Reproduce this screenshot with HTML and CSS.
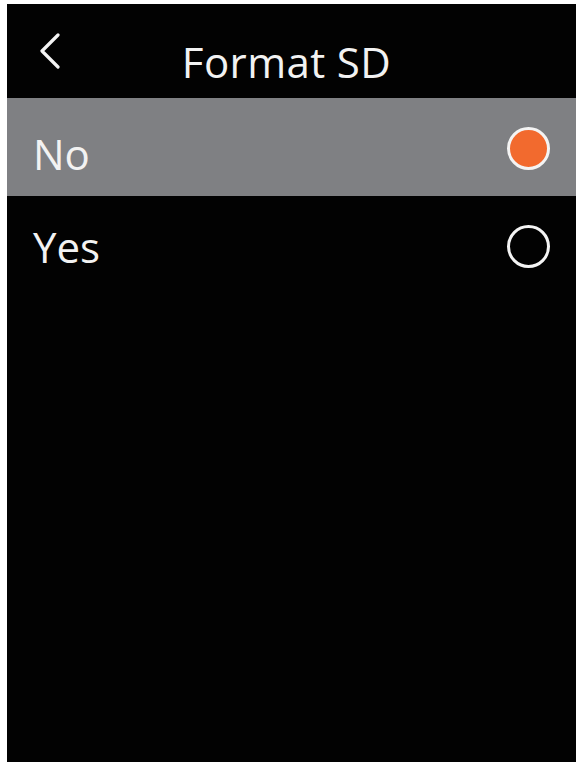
FILE: index.html
```html
<!DOCTYPE html>
<html lang="en">
<head>
<meta charset="utf-8">
<title>Format SD</title>
<link rel="stylesheet" href="styles.css">
</head>
<body>
<div class="screen">
  <header class="header">
    <button class="back" aria-label="Back">
      <svg width="24" height="36" viewBox="0 0 24 36"><path d="M20 2 L4 18 L20 34" fill="none" stroke="#f4f4f4" stroke-width="3.2" stroke-linecap="round" stroke-linejoin="round"/></svg>
    </button>
    <h1 class="title">Format SD</h1>
    <span class="spacer"></span>
  </header>
  <ul class="options">
    <li class="option selected"><span class="label">No</span><span class="radio checked"></span></li>
    <li class="option"><span class="label">Yes</span><span class="radio"></span></li>
  </ul>
</div>
</body>
</html>
```
FILE: styles.css
```css
html, body {
  margin: 0;
  padding: 0;
  background: #ffffff;
}
body {
  padding: 4px 7px 3px 7px;
  font-family: "Open Sans", "DejaVu Sans", sans-serif;
}
.screen {
  width: 569px;
  height: 758px;
  background: #020202;
  color: #f2f2f2;
  display: flex;
  flex-direction: column;
}
.header {
  height: 94px;
  display: grid;
  grid-template-columns: 1fr auto 1fr;
  align-items: center;
}
.back {
  justify-self: start;
  margin-left: 31px;
  padding: 0;
  border: 0;
  background: none;
  display: flex;
}
.title {
  margin: 22px 0 0 -10px;
  font-weight: 400;
  font-size: 42px;
  line-height: 42px;
  letter-spacing: 0.4px;
}
.options {
  list-style: none;
  margin: 0;
  padding: 0;
}
.option {
  height: 98px;
  display: flex;
  align-items: center;
  justify-content: space-between;
  padding: 0 26px;
  box-sizing: border-box;
}
.option.selected {
  background: #7f8083;
}
.label {
  font-size: 42px;
  line-height: 42px;
  padding-top: 14px;
}
.option + .option .label {
  padding-top: 4px;
}
.radio {
  width: 37px;
  height: 37px;
  border: 3px solid #f4f4f4;
  border-radius: 50%;
  margin-top: 3px;
}
.radio.checked {
  background: #f26a2e;
}
```
